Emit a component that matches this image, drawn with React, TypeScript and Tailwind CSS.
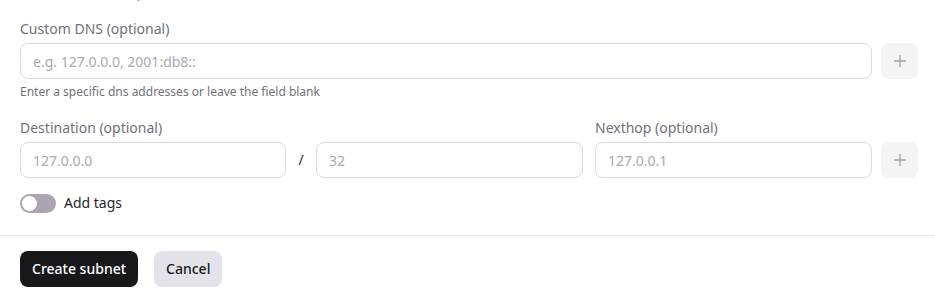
import React from "react";

function PlusBtn() {
  return (
    <button className="flex h-9 w-[37px] shrink-0 items-center justify-center rounded-lg bg-[#f4f4f5]">
      <svg width="14" height="14" viewBox="0 0 14 14" fill="none" stroke="#a1a1aa" strokeWidth="1.3">
        <path d="M7 1v12M1 7h12" />
      </svg>
    </button>
  );
}

function Input({ placeholder, className = "" }: { placeholder: string; className?: string }) {
  return (
    <input
      placeholder={placeholder}
      className={
        "h-9 rounded-lg border border-[#d9d9de] bg-white px-3 text-sm text-[#27272a] outline-none placeholder:text-[#a9a9b2] " +
        className
      }
    />
  );
}

export default function App() {
  return (
    <div className="h-[300px] w-[935px] overflow-hidden bg-white font-['Noto_Sans',sans-serif]">
      <div className="pl-5 pr-[17px]">
        <div className="-mt-[18px] text-sm leading-5 text-[#71717a]">Router address (optional)</div>
        <div className="mt-[17px] text-sm leading-5 text-[#71717a]">Custom DNS (optional)</div>
        <div className="mt-1 flex gap-[9px]">
          <Input placeholder="e.g. 127.0.0.0, 2001:db8::" className="flex-1" />
          <PlusBtn />
        </div>
        <div className="mt-[5px] text-xs leading-4 text-[#71717a]">
          Enter a specific dns addresses or leave the field blank
        </div>
        <div className="mt-[18px] flex items-end">
          <div className="flex w-[266px] flex-col gap-1">
            <div className="text-sm leading-5 text-[#71717a]">Destination (optional)</div>
            <Input placeholder="127.0.0.0" className="w-full" />
          </div>
          <div className="flex h-9 w-[30px] items-center justify-center text-sm text-[#27272a]">/</div>
          <Input placeholder="32" className="w-[267px]" />
          <div className="ml-3 flex flex-1 flex-col gap-1">
            <div className="text-sm leading-5 text-[#71717a]">Nexthop (optional)</div>
            <Input placeholder="127.0.0.1" className="w-full" />
          </div>
          <div className="ml-[9px]">
            <PlusBtn />
          </div>
        </div>
        <div className="mt-[15px] flex items-center gap-2">
          <div className="flex h-[19px] w-9 items-center rounded-full bg-[#aca4b3] px-[2px]">
            <div className="h-[15px] w-[15px] rounded-full bg-white" />
          </div>
          <span className="text-sm leading-5 text-[#27272a]">Add tags</span>
        </div>
      </div>
      <div className="mt-[22px] border-t border-[#e4e4e7]" />
      <div className="flex gap-4 px-5 pt-[15px]">
        <button className="h-9 rounded-lg bg-[#18181b] px-3 text-sm font-medium text-white">Create subnet</button>
        <button className="h-9 rounded-lg bg-[#e4e3e9] px-3 text-sm font-medium text-[#18181b]">Cancel</button>
      </div>
    </div>
  );
}
